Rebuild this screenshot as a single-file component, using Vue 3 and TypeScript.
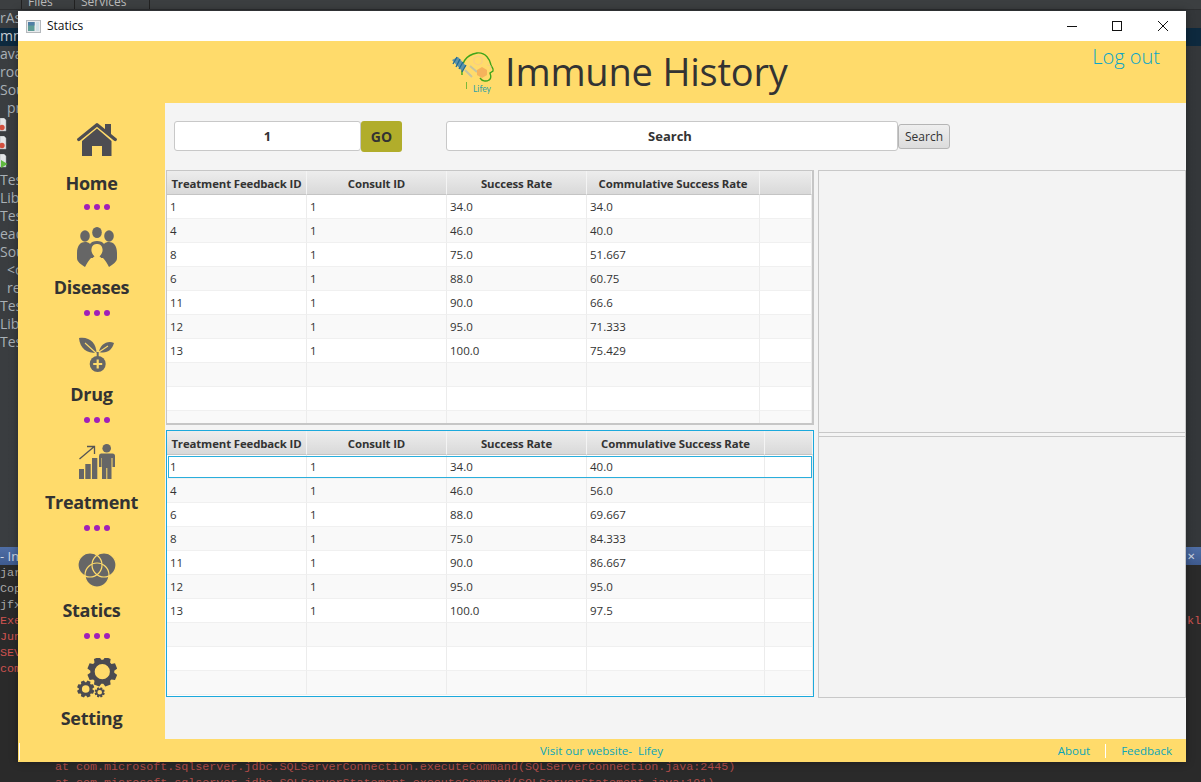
<script setup lang="ts">
function gear(cx: number, cy: number, R: number, r: number, hole: number, teeth: number): string {
  const pts: string[] = []
  const step = (Math.PI * 2) / teeth
  for (let i = 0; i < teeth; i++) {
    const a = i * step - step / 2
    const offs: [number, number][] = [
      [-0.5, r], [-0.3, R], [0.3, R], [0.5, r],
    ]
    for (const [o, rad] of offs) {
      const t = a + o * step * 0.8
      pts.push(`${(cx + rad * Math.cos(t)).toFixed(2)} ${(cy + rad * Math.sin(t)).toFixed(2)}`)
    }
  }
  const outer = 'M' + pts.join('L') + 'Z'
  const inner = `M${cx - hole} ${cy}a${hole} ${hole} 0 1 0 ${hole * 2} 0a${hole} ${hole} 0 1 0 ${-hole * 2} 0Z`
  return outer + inner
}
const gears = [gear(25.3, 13.7, 15.2, 12, 7.6, 8), gear(8.7, 31, 8.8, 6.8, 3.8, 8), gear(22.7, 34.3, 5.2, 3.9, 2.3, 8)]

const tree = ['rAs', 'mm', 'ava', 'rod', 'Sou', 'pr', '', '', '', 'Tes', 'Lib', 'Tes', 'ead', 'Sou', '<c', 're', 'Tes', 'Lib', 'Tes']
const consoleTop = [
  { t: 'jar', red: false, tail: '' }, { t: 'Cop', red: false, tail: '' }, { t: 'jfx', red: false, tail: '' },
  { t: 'Exe', red: true, tail: 'kl' }, { t: 'Jun', red: true, tail: '' }, { t: 'SEV', red: true, tail: '' }, { t: 'com', red: true, tail: '' },
]
const stack = [
  'at com.microsoft.sqlserver.jdbc.SQLServerConnection.executeCommand(SQLServerConnection.java:2445)',
  'at com.microsoft.sqlserver.jdbc.SQLServerStatement.executeCommand(SQLServerStatement.java:191)',
]

const nav = ['home', 'diseases', 'drug', 'treatment', 'statics', 'setting']
const labels: Record<string, string> = {
  home: 'Home', diseases: 'Diseases', drug: 'Drug', treatment: 'Treatment', statics: 'Statics', setting: 'Setting',
}

const heads = ['Treatment Feedback ID', 'Consult ID', 'Success Rate', 'Commulative Success Rate', '']
const tables = [
  {
    cls: 'top',
    cols: '140px 140px 140px 173px 1fr',
    rows: [
      ['1', '1', '34.0', '34.0'], ['4', '1', '46.0', '40.0'], ['8', '1', '75.0', '51.667'],
      ['6', '1', '88.0', '60.75'], ['11', '1', '90.0', '66.6'], ['12', '1', '95.0', '71.333'],
      ['13', '1', '100.0', '75.429'], ['', '', '', ''], ['', '', '', ''], ['', '', '', ''],
    ],
  },
  {
    cls: 'bottom',
    cols: '140px 140px 140px 178px 1fr',
    rows: [
      ['1', '1', '34.0', '40.0'], ['4', '1', '46.0', '56.0'], ['6', '1', '88.0', '69.667'],
      ['8', '1', '75.0', '84.333'], ['11', '1', '90.0', '86.667'], ['12', '1', '95.0', '95.0'],
      ['13', '1', '100.0', '97.5'], ['', '', '', ''], ['', '', '', ''], ['', '', '', ''],
    ],
  },
]
</script>

<template>
  <div class="desktop">
    <div class="ide">
      <div class="ide-tabs">
        <span class="ide-tab small"></span>
        <span class="ide-tab">Files</span>
        <span class="ide-tab wide">Services</span>
      </div>
      <div class="ide-tree">
        <div v-for="(t, i) in tree" :key="i" class="tree-row" :class="{ sel: i === 1, indent: t === 'pr' || t === '<c' || t === 're' }">
          <template v-if="t">{{ t }}</template>
          <svg v-else class="file-ico" width="8" height="15" viewBox="0 0 8 15">
            <path d="M0 0H4L6 2V13H0Z" fill="#e4e6e8" stroke="#9aa0a6" stroke-width="0.5" />
            <circle v-if="i !== 8" cx="2" cy="9.500" r="2.700" fill="#d2503f" />
            <path v-else d="M1 6L7.500 10L1 14Z" fill="#5fb83f" />
          </svg>
        </div>
      </div>
      <div class="ide-console">
        <div class="console-tab"><span>- Im</span><span class="console-x">✕</span></div>
        <div class="console-body">
          <div v-for="l in consoleTop" :key="l.t" class="con-line" :class="{ red: l.red }">
            <span>{{ l.t }}</span><span v-if="l.tail">{{ l.tail }}</span>
          </div>
          <div class="con-gap"></div>
          <div v-for="s in stack" :key="s" class="con-line red stack">{{ s }}</div>
        </div>
      </div>
    </div>

    <section class="window">
      <header class="titlebar">
        <svg class="app-ico" width="15" height="13" viewBox="0 0 15 13">
          <rect x="0.5" y="0.5" width="14" height="12" fill="#e8eaec" stroke="#b4b8bc" />
          <rect x="2" y="2" width="6.5" height="9" fill="#5d9c96" />
          <rect x="2" y="2" width="6.5" height="3.5" fill="#4f7fa5" />
          <rect x="10" y="2" width="3" height="9" fill="#cfe0e6" />
        </svg>
        <span class="win-title">Statics</span>
        <span class="win-controls">
          <svg width="10" height="10" viewBox="0 0 10 10"><path d="M0 5.5H10" stroke="#111" fill="none" /></svg>
          <svg width="10" height="10" viewBox="0 0 10 10"><rect x="0.5" y="0.5" width="9" height="9" stroke="#111" fill="none" /></svg>
          <svg class="close-ico" width="10" height="10" viewBox="0 0 10 10"><path d="M0 0L10 10M10 0L0 10" stroke="#111" fill="none" /></svg>
        </span>
      </header>

      <div class="banner">
        <svg class="logo" width="48" height="44" viewBox="0 0 48 44">
          <path d="M12 24C11 12 16 4 27 2C36 1 40 9 41 14C42 17 44 18 43 20L40 22C41 25 41 28 39 29C36 31 32 30 30 27" fill="none" stroke="#3fa51a" stroke-width="1.400" />
          <path d="M16.500 31V38" stroke="#7ab83a" stroke-width="1" fill="none" />
          <path d="M2 9L8 6L16 15L12 20Z" fill="#5f93a8" />
          <path d="M3 13L7 6M6 16L10 8M9 18L13 11M12 21L16 14" stroke="#1f6a94" stroke-width="1.300" fill="none" />
          <path d="M15 19L22 26M20 15L27 21" stroke="#c5c4a0" stroke-width="2" fill="none" />
          <path d="M32 16L37 19V24L32 27L27 24V19Z" fill="#f5b25c" />
          <path d="M28 5L32 7V12L28 14L24 12V7Z" fill="none" stroke="#f6c98a" stroke-width="0.9" />
          <path d="M37 14L41 15L40 19" fill="none" stroke="#f6c98a" stroke-width="0.8" />
          <text x="23" y="41" class="logo-text">Lifey</text>
        </svg>
        <h1 class="app-title">Immune History</h1>
        <a class="logout">Log out</a>
      </div>

      <div class="main">
        <nav class="sidebar">
          <div v-for="(n, i) in nav" :key="n" class="nav-item" :class="n">
            <svg v-if="n === 'home'" class="ico" width="40" height="33" viewBox="0 0 40 33">
              <path d="M28 1H34V13L28 8Z" fill="#4d4d52" />
              <path d="M5 18L20 5.500L34.500 18V33H25V23H15V33H5Z" fill="#4d4d52" />
              <path d="M1.800 16.500L20 1.800L38.200 16.500" fill="none" stroke="#4d4d52" stroke-width="3.4" stroke-linecap="round" stroke-linejoin="round" />
            </svg>
            <svg v-else-if="n === 'diseases'" class="ico" width="40" height="40" viewBox="0 0 40 40">
              <ellipse cx="20" cy="5.500" rx="4.800" ry="5.500" fill="#666" />
              <ellipse cx="8" cy="9" rx="4.800" ry="5.800" fill="#666" />
              <ellipse cx="32" cy="9" rx="4.800" ry="5.800" fill="#666" />
              <path d="M0 26C0 18 4 15 8 15C10 15 12 15.500 13 17C15 13 25 13 27 17C28 15.500 30 15 32 15C36 15 40 18 40 26V31C40 35 36 37 32 40C30 36 28 33 26 31H14C12 33 10 36 8 40C4 37 0 35 0 31Z" fill="#666" />
              <path d="M14 40C14 33 15 31 17.500 29.500C15.500 27 14 25 14.500 22C15 18 17.500 17 20 17C22.500 17 25 18 25.500 22C26 25 24.500 27 22.500 29.500C25 31 26 33 26 40Z" fill="#ffdb6b" />
            </svg>
            <svg v-else-if="n === 'drug'" class="ico" width="40" height="35" viewBox="0 0 40 35">
              <path d="M2 1C12 -1 19.500 6 19.500 16C10 16 3 12 2 1Z" fill="#666" />
              <path d="M37 6C30 3 23 8 22 15C30 17 35 13 37 6Z" fill="#666" />
              <path d="M8 6L19 16M31 9L22 15" stroke="#ffdb6b" stroke-width="1.100" fill="none" />
              <path d="M20.700 15V20" stroke="#666" stroke-width="2" />
              <circle cx="20.700" cy="27" r="8" fill="#666" />
              <path d="M20.700 22.500V31.500M16.200 27H25.200" stroke="#ffdb6b" stroke-width="2.200" />
            </svg>
            <svg v-else-if="n === 'treatment'" class="ico" width="36" height="35" viewBox="0 0 36 35">
              <path d="M0 25H5V35H0ZM6.300 20H11.700V35H6.300ZM13 14H18.300V35H13Z" fill="#666" />
              <path d="M0.500 15L15 2.700M8 2.500H15.500V10" fill="none" stroke="#555" stroke-width="1.300" />
              <circle cx="27.700" cy="4.300" r="4.300" fill="#666" />
              <path d="M22 9.500H33.500Q36 9.500 36 12V23H33.500V14H32.500V35H28.300V24H27.300V35H23V14H22.500V23H20V12Q20 9.500 22 9.500Z" fill="#666" />
            </svg>
            <svg v-else-if="n === 'statics'" class="ico" width="38" height="34" viewBox="0 0 38 34">
              <g fill="#666">
                <circle cx="12" cy="12" r="12" />
                <circle cx="26" cy="12" r="12" />
                <circle cx="19" cy="22" r="12" />
              </g>
              <g fill="none" stroke="#ffdb6b" stroke-width="1.200">
                <circle cx="12" cy="12" r="12" />
                <circle cx="26" cy="12" r="12" />
                <circle cx="19" cy="22" r="12" />
              </g>
            </svg>
            <svg v-else class="ico" width="40" height="40" viewBox="0 0 40 40">
              <path v-for="g in gears" :key="g" :d="g" fill="#4b4b50" fill-rule="evenodd" />
            </svg>
            <span class="nav-label">{{ labels[n] }}</span>
            <span v-if="i < nav.length - 1" class="dots"><i></i><i></i><i></i></span>
          </div>
        </nav>

        <div class="content">
          <div class="toolbar">
            <input class="field id-field" value="1" />
            <button class="go">GO</button>
            <input class="field search-field" value="Search" />
            <button class="search-btn">Search</button>
          </div>

          <div class="split">
            <div class="left-pane">
              <div v-for="t in tables" :key="t.cls" class="table" :class="t.cls">
                <div class="row head" :style="{ gridTemplateColumns: t.cols }">
                  <div v-for="h in heads" :key="h" class="cell">{{ h }}</div>
                </div>
                <div
                  v-for="(r, ri) in t.rows"
                  :key="ri"
                  class="row"
                  :class="{ alt: ri % 2 === 1, focus: t.cls === 'bottom' && ri === 0 }"
                  :style="{ gridTemplateColumns: t.cols }"
                >
                  <div v-for="(c, ci) in r" :key="ci" class="cell">{{ c }}</div>
                  <div class="cell"></div>
                </div>
              </div>
            </div>
            <div class="right-pane">
              <div class="blank upper"></div>
              <div class="blank lower"></div>
            </div>
          </div>
        </div>
      </div>

      <footer class="footer">
        <i class="caret"></i>
        <span class="visit">Visit our website-&nbsp; Lifey</span>
        <span class="foot-links">
          <a>About</a>
          <i class="sep"></i>
          <a>Feedback</a>
        </span>
      </footer>
    </section>
  </div>
</template>

<style>
html, body { margin: 0; padding: 0; background: #2b2b2b; }
</style>

<style scoped>
.desktop {
  position: relative;
  width: 1201px;
  height: 782px;
  overflow: hidden;
  font-family: "Open Sans", "Noto Sans", sans-serif;
  color: #333;
}
.ide {
  display: flex;
  flex-direction: column;
  height: 782px;
  overflow: hidden;
  background: #3b3e41;
}
.ide-tabs {
  flex: none;
  display: flex;
  height: 9px;
  overflow: hidden;
  background: #3c3f41;
  border-bottom: 1px solid #2c2e30;
  font-size: 12px;
  line-height: 4px;
  color: #bbb;
}
.ide-tab {
  width: 53px;
  padding-left: 6px;
  box-sizing: border-box;
  border-right: 1px solid #222;
}
.ide-tab.small { width: 22px; }
.ide-tab.wide { width: 75px; }
.ide-tree {
  flex: none;
  height: 537px;
  overflow: hidden;
  background: linear-gradient(90deg, #3a3d40, #34373a);
  font-size: 14px;
  color: #a9b0b6;
}
.tree-row {
  height: 18px;
  line-height: 16px;
  white-space: nowrap;
  overflow: hidden;
}
.tree-row.sel { background: #0d293e; color: #c5ccd2; }
.tree-row.indent { padding-left: 7px; }
.file-ico { display: block; }
.ide-console {
  flex: 1;
  min-height: 0;
  display: flex;
  flex-direction: column;
  background: #2a2a2a;
}
.console-tab {
  flex: none;
  display: flex;
  justify-content: space-between;
  height: 18px;
  padding-right: 6px;
  background: linear-gradient(#4f6ea6, #3e5a8e);
  color: #cfd6e4;
  font-size: 13px;
  line-height: 18px;
}
.console-x { font-size: 10px; }
.console-body {
  font-family: "Liberation Mono", monospace;
  font-size: 11.7px;
  color: #a8a8a8;
}
.con-line {
  display: flex;
  justify-content: space-between;
  height: 16px;
  line-height: 16px;
  white-space: nowrap;
}
.con-line.red { color: #cf5350; }
.con-line.stack {
  display: block;
  height: 12px;
  line-height: 12px;
  margin-bottom: 4px;
  padding-left: 55px;
  color: #b04c49;
}
.con-gap { height: 84px; }

.window {
  position: absolute;
  left: 18px;
  top: 11px;
  width: 1168px;
  height: 751px;
  display: flex;
  flex-direction: column;
  background: #f4f4f4;
  box-shadow: 0 0 8px rgba(0, 0, 0, 0.35);
}
.titlebar {
  display: flex;
  align-items: center;
  height: 30px;
  flex: none;
  background: #fff;
  padding-left: 8px;
}
.win-title {
  margin-left: 6px;
  font-size: 12px;
  line-height: 28px;
  color: #111;
}
.win-controls {
  margin-left: auto;
  display: flex;
  gap: 35px;
  padding-right: 18px;
}
.close-ico { margin-left: 1px; }
.banner {
  position: relative;
  flex: none;
  display: flex;
  align-items: center;
  height: 62px;
  background: #ffdb6b;
  padding-left: 432px;
}
.logo { flex: none; margin-top: 1px; }
.logo-text {
  font-family: "Lato", sans-serif;
  font-size: 8.500px;
  fill: #2f9fa8;
}
.app-title {
  margin: 0 0 2px 7px;
  font-size: 38px;
  font-weight: 400;
  letter-spacing: -0.2px;
  line-height: 60px;
  color: #333;
  white-space: nowrap;
}
.logout {
  position: absolute;
  right: 26px;
  top: 2px;
  font-size: 20px;
  font-weight: 300;
  line-height: 28px;
  color: #0aa5c8;
}
.main {
  flex: 1;
  display: flex;
  min-height: 0;
}
.sidebar {
  flex: none;
  width: 147px;
  box-sizing: border-box;
  padding-top: 20px;
  background: #ffdb6b;
  display: flex;
  flex-direction: column;
}
.nav-item {
  display: flex;
  flex-direction: column;
  align-items: center;
}
.ico { display: block; flex: none; margin-left: 11px; }
.nav-label {
  height: 24px;
  line-height: 24px;
  font-size: 18px;
  font-weight: 700;
  letter-spacing: -0.3px;
  color: #333;
  white-space: nowrap;
}
.dots {
  display: flex;
  gap: 4px;
  height: 6px;
  margin-top: 11px;
  margin-left: 11px;
}
.dots i {
  width: 6px;
  height: 6px;
  border-radius: 50%;
  background: #a020b8;
}
.home .nav-label { margin-top: 15px; }
.home .dots { margin-top: 9px; }
.diseases { margin-top: 17px; }
.diseases .nav-label { margin-top: 8px; }
.drug { margin-top: 21px; }
.drug .nav-label { margin-top: 10px; }
.treatment { margin-top: 21px; }
.treatment .nav-label { margin-top: 11px; }
.statics { margin-top: 22px; }
.statics .nav-label { margin-top: 11px; }
.setting { margin-top: 19px; }
.setting .nav-label { margin-top: 8px; }

.content {
  flex: 1;
  min-width: 0;
  display: flex;
  flex-direction: column;
  background: #f4f4f4;
}
.toolbar {
  flex: none;
  display: flex;
  align-items: flex-start;
  height: 67px;
  box-sizing: border-box;
  padding: 18px 0 0 9px;
}
.field {
  box-sizing: border-box;
  height: 30px;
  padding: 0;
  border: 1px solid #c8c8c8;
  border-radius: 3px;
  background: #fff;
  font-family: inherit;
  font-size: 13px;
  font-weight: 700;
  color: #333;
  text-align: center;
  outline: none;
}
.id-field { width: 187px; }
.search-field { width: 452px; margin-left: 44px; padding-right: 4px; }
.go {
  width: 41px;
  height: 31px;
  padding: 0;
  border: 0;
  border-radius: 3px;
  background: #b1ad2b;
  font-family: inherit;
  font-size: 14px;
  line-height: 29px;
  font-weight: 700;
  color: #333;
}
.search-btn {
  width: 52px;
  height: 25px;
  margin-top: 3px;
  padding: 0;
  border: 1px solid #b5b5b5;
  border-radius: 3px;
  background: linear-gradient(#efefef, #dcdcdc);
  font-family: inherit;
  font-size: 12px;
  color: #333;
}
.split {
  flex: none;
  display: flex;
  height: 528px;
  margin-left: 1px;
}
.left-pane {
  flex: none;
  width: 648px;
  display: flex;
  flex-direction: column;
}
.table {
  box-sizing: border-box;
  overflow: hidden;
  background: #fff;
}
.table.top {
  height: 255px;
  border: 1px solid #c6c6c6;
  border-right-width: 2px;
  border-bottom-width: 2px;
}
.table.bottom {
  height: 267px;
  margin-top: 5px;
  padding: 0;
  border: 1.500px solid #1ca9dc;
}
.row {
  position: relative;
  display: grid;
  height: 24px;
  background: #fff;
  font-size: 11.500px;
  line-height: 23px;
  color: #333;
}
.row.alt { background: #f9f9f9; }
.cell {
  box-sizing: border-box;
  padding-left: 3px;
  border-right: 1px solid #ececec;
  border-bottom: 1px solid #f0f0f0;
  white-space: nowrap;
  overflow: hidden;
}
.row.head {
  height: 24px;
  background: linear-gradient(#ededed, #d8d8d8);
  font-size: 11.400px;
  letter-spacing: -0.12px;
  font-weight: 700;
  line-height: 26px;
}
.row.head .cell {
  padding: 0;
  text-align: center;
  border-right: 1px solid #f4f4f4;
  border-bottom: 1px solid #c4c4c4;
}
.row.focus::after {
  content: "";
  position: absolute;
  left: 1px;
  right: 1px;
  top: 1px;
  bottom: 1px;
  border: 1px solid #2aaedc;
}
.right-pane {
  flex: 1;
  display: flex;
  flex-direction: column;
  margin-left: 4px;
  border: 1px solid #c8c8c8;
}
.blank { background: #f3f3f3; }
.blank.upper { height: 261px; border-bottom: 1px solid #c8c8c8; }
.blank.lower { flex: 1; margin-top: 3px; border-top: 1px solid #c8c8c8; }

.footer {
  position: relative;
  flex: none;
  height: 23px;
  display: flex;
  align-items: center;
  background: #ffdb6b;
  font-size: 11.500px;
  color: #0aa5b8;
}
.caret {
  position: absolute;
  left: 1px;
  top: 4px;
  width: 1px;
  height: 17px;
  background: #fff;
}
.visit { margin-left: 522px; }
.foot-links {
  margin-left: auto;
  margin-right: 14px;
  display: flex;
  align-items: center;
  gap: 15px;
}
.sep {
  width: 1px;
  height: 14px;
  background: #fff;
}
</style>
